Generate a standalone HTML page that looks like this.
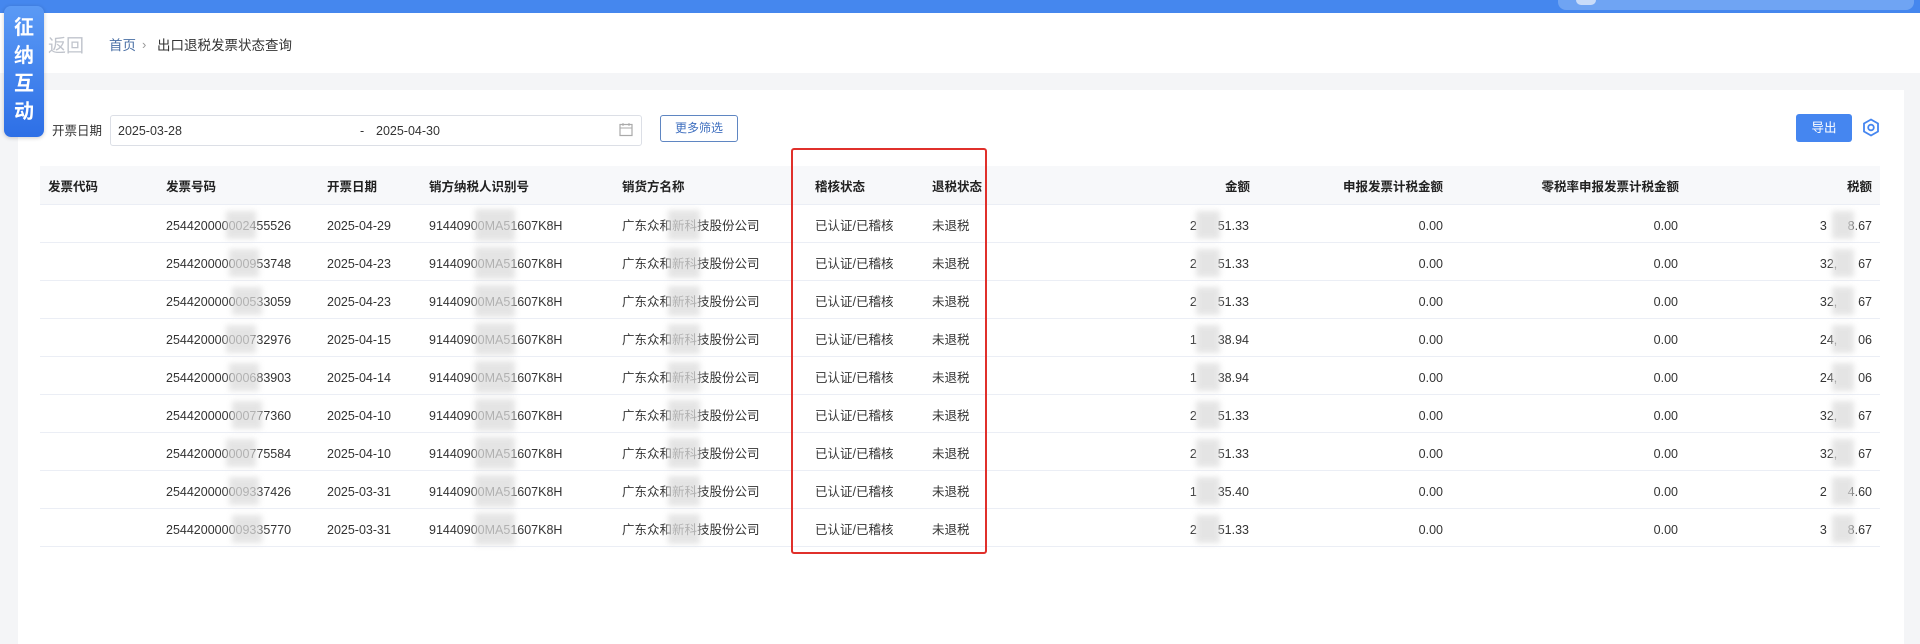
<!DOCTYPE html>
<html><head><meta charset="utf-8"><style>
*{margin:0;padding:0;box-sizing:border-box}
body{width:1920px;height:644px;overflow:hidden;background:#fff;font-family:"Liberation Sans","Noto Sans CJK SC",sans-serif;font-size:12.5px;line-height:16px;color:#333;position:relative}
.a{position:absolute;white-space:nowrap;line-height:16px}
.bl{position:absolute;background:#dcdcdc;filter:blur(3px);opacity:.75}
.r{text-align:right}
.hd{font-weight:bold;color:#222}
</style></head><body>
<div class="a" style="left:0;top:0;width:1920px;height:13px;background:#4587ee"></div>
<div class="a" style="left:1558px;top:0;width:356px;height:10px;background:#6fa4f3;border-radius:0 0 8px 8px"></div>
<div class="a" style="left:1576px;top:0;width:20px;height:5px;background:#c9dcf9;border-radius:0 0 10px 10px"></div>

<div class="a" style="left:48px;top:36px;font-size:18px;line-height:20px;color:#c0c4cc">返回</div>
<div class="a" style="left:109px;top:38px;font-size:13.5px;color:#4a6fa5">首页</div>
<div class="a" style="left:142px;top:37px;font-size:13px;color:#999">›</div>
<div class="a" style="left:157px;top:38px;font-size:13.5px;color:#333">出口退税发票状态查询</div>

<div class="a" style="left:0;top:73px;width:1920px;height:571px;background:#f4f5f7"></div>
<div class="a" style="left:18px;top:90px;width:1886px;height:554px;background:#fff"></div>

<div class="a" style="left:52px;top:123px">开票日期</div>
<div class="a" style="left:110px;top:115px;width:532px;height:31px;border:1px solid #dcdfe6;border-radius:3px"></div>
<div class="a" style="left:118px;top:123px">2025-03-28</div>
<div class="a" style="left:360px;top:123px">-</div>
<div class="a" style="left:376px;top:123px">2025-04-30</div>
<svg class="a" style="left:619px;top:122px" width="14" height="15" viewBox="0 0 14 15"><rect x="1" y="2.5" width="12" height="11" fill="none" stroke="#aaa" stroke-width="1.2"/><line x1="1" y1="6" x2="13" y2="6" stroke="#aaa"/><line x1="4" y1="1" x2="4" y2="4" stroke="#aaa"/><line x1="10" y1="1" x2="10" y2="4" stroke="#aaa"/></svg>
<div class="a" style="left:660px;top:115px;width:78px;height:27px;border:1px solid #5f86c2;border-radius:3px;color:#3f6fbf;text-align:center;line-height:25px;font-size:12px">更多筛选</div>

<div class="a" style="left:1796px;top:114px;width:56px;height:28px;background:#4586f0;border-radius:3px;color:#fff;text-align:center;line-height:28px;font-size:12.5px">导出</div>
<svg class="a" style="left:1862px;top:118px" width="18" height="19" viewBox="0 0 18 19"><polygon points="9,1.5 16,5.5 16,13.5 9,17.5 2,13.5 2,5.5" fill="none" stroke="#4586f0" stroke-width="1.8"/><circle cx="9" cy="9.5" r="2.8" fill="none" stroke="#4586f0" stroke-width="1.8"/></svg>

<div class="a" style="left:40px;top:166px;width:1840px;height:39px;background:#f7f8fa;border-bottom:1px solid #ebeef5"></div>
<div class="a hd" style="left:48px;top:179px">发票代码</div>
<div class="a hd" style="left:166px;top:179px">发票号码</div>
<div class="a hd" style="left:327px;top:179px">开票日期</div>
<div class="a hd" style="left:429px;top:179px">销方纳税人识别号</div>
<div class="a hd" style="left:622px;top:179px">销货方名称</div>
<div class="a hd" style="left:815px;top:179px">稽核状态</div>
<div class="a hd" style="left:932px;top:179px">退税状态</div>
<div class="a hd r" style="right:670px;top:179px">金额</div>
<div class="a hd r" style="right:477px;top:179px">申报发票计税金额</div>
<div class="a hd r" style="right:241px;top:179px">零税率申报发票计税金额</div>
<div class="a hd r" style="right:48px;top:179px">税额</div>

<div id="rows"></div>
<script>
var d=[["254420000002455526","2025-04-29","2","51.33","3","8.67"],
["254420000000953748","2025-04-23","2","51.33","32,","67"],
["254420000000533059","2025-04-23","2","51.33","32,","67"],
["254420000000732976","2025-04-15","1","38.94","24,","06"],
["254420000000683903","2025-04-14","1","38.94","24,","06"],
["254420000000777360","2025-04-10","2","51.33","32,","67"],
["254420000000775584","2025-04-10","2","51.33","32,","67"],
["254420000009337426","2025-03-31","1","35.40","2","4.60"],
["254420000009335770","2025-03-31","2","51.33","3","8.67"]];
var h="";
d.forEach(function(r,i){var t=205+i*38,y=t+13;
h+='<div class="a" style="left:40px;top:'+(t+37)+'px;width:1840px;height:1px;background:#ebeef5"></div>';
h+='<div class="a" style="left:166px;top:'+y+'px">'+r[0]+'</div>';
h+='<div class="bl" style="left:'+(226+(i%3)*3)+'px;top:'+(t+6)+'px;width:30px;height:28px"></div>';
h+='<div class="a" style="left:327px;top:'+y+'px">'+r[1]+'</div>';
h+='<div class="a" style="left:429px;top:'+y+'px">91440900MA51607K8H</div>';
h+='<div class="bl" style="left:475px;top:'+(t+4)+'px;width:40px;height:32px"></div>';
h+='<div class="a" style="left:622px;top:'+y+'px">广东众和新科技股份公司</div>';
h+='<div class="bl" style="left:668px;top:'+(t+5)+'px;width:32px;height:30px"></div>';
h+='<div class="a" style="left:815px;top:'+y+'px">已认证/已稽核</div>';
h+='<div class="a" style="left:932px;top:'+y+'px">未退税</div>';
h+='<div class="a r" style="right:671px;top:'+y+'px">'+r[2]+'&nbsp;&nbsp;&nbsp;&nbsp;&nbsp;&nbsp;'+r[3]+'</div>';
h+='<div class="bl" style="left:1196px;top:'+(t+6)+'px;width:24px;height:28px"></div>';
h+='<div class="a r" style="right:477px;top:'+y+'px">0.00</div>';
h+='<div class="a r" style="right:242px;top:'+y+'px">0.00</div>';
h+='<div class="a r" style="right:48px;top:'+y+'px">'+r[4]+'&nbsp;&nbsp;&nbsp;&nbsp;&nbsp;&nbsp;'+r[5]+'</div>';
h+='<div class="bl" style="left:1832px;top:'+(t+6)+'px;width:22px;height:28px"></div>';
});
document.getElementById("rows").innerHTML=h;
</script>
<div class="a" style="left:791px;top:148px;width:196px;height:406px;border:2px solid #e0302b;border-radius:3px"></div>

<div class="a" style="left:4px;top:6px;width:40px;height:131px;background:linear-gradient(180deg,#5b9af5,#2d6fe6);border-radius:7px;box-shadow:0 1px 4px rgba(0,0,0,.2)"></div>
<div class="a" style="left:4px;top:14px;width:40px;color:#fff;font-size:20px;font-weight:bold;line-height:28px;text-align:center;white-space:normal">征<br>纳<br>互<br>动</div>
</body></html>
